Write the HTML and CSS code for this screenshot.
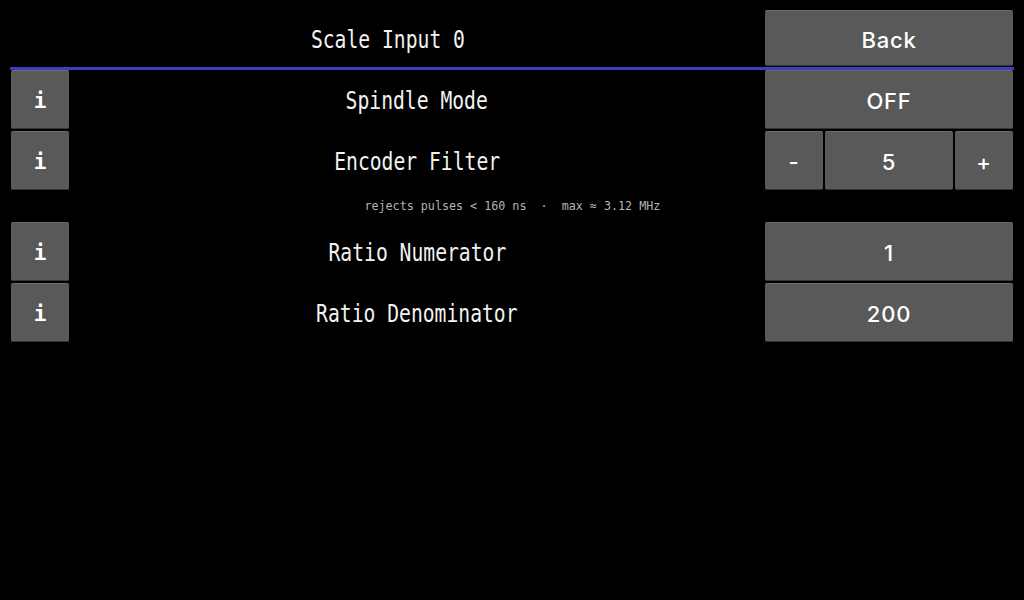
FILE: index.html
```html
<!DOCTYPE html>
<html lang="en">
<head>
  <meta charset="UTF-8" />
  <meta name="viewport" content="width=device-width, initial-scale=1.0"/>
  <title>Scale Input 0</title>
  <link rel="stylesheet" href="styles.css">
</head>
<body>
  <div class="screen">
    <header class="top">
      <h1 class="title"><span class="narrow">Scale Input 0</span></h1>
      <button class="btn back">Back</button>
    </header>
    <div class="rule"></div>

    <div class="row">
      <button class="btn info">i</button>
      <div class="label"><span class="narrow">Spindle Mode</span></div>
      <button class="btn value">OFF</button>
    </div>

    <div class="row">
      <button class="btn info">i</button>
      <div class="label"><span class="narrow">Encoder Filter</span></div>
      <div class="stepper">
        <button class="btn">-</button>
        <button class="btn">5</button>
        <button class="btn">+</button>
      </div>
    </div>
    <div class="hint"><span class="narrow">rejects pulses &lt; 160 ns &nbsp;&middot;&nbsp; max &asymp; 3.12 MHz</span></div>

    <div class="row">
      <button class="btn info">i</button>
      <div class="label"><span class="narrow">Ratio Numerator</span></div>
      <button class="btn value">1</button>
    </div>

    <div class="row">
      <button class="btn info">i</button>
      <div class="label"><span class="narrow">Ratio Denominator</span></div>
      <button class="btn value">200</button>
    </div>
  </div>
</body>
</html>
```

FILE: styles.css
```css
body { margin: 0; background: #000; color: #f2f2f2; font-family: "DejaVu Sans Mono", monospace; }
.screen { width: 1004px; padding: 10px; }

/* condensed look for the mono labels */
.narrow { display: inline-block; transform: scaleX(0.82); white-space: pre; }

.top { display: grid; grid-template-columns: 1fr 248px; height: 56px; margin-right: 1px; }
.title { margin: 0; padding-top: 3px; font-size: 24px; font-weight: normal; display: flex; align-items: center; justify-content: center; }
.rule { height: 3px; background: #3d3dbd; margin-top: 1px; }

.btn {
  background: #595959; color: #fff; border: none; border-radius: 2px;
  border-top: 1px solid #6c6c6c; border-bottom: 1px solid #363636;
  font-family: Inter, "Open Sans", sans-serif; font-weight: 500; font-size: 22px; letter-spacing: 0.8px;
  padding: 3px 0 0 0; cursor: pointer;
}

.row { display: grid; grid-template-columns: 58px 1fr 248px; height: 59px; margin: 0 1px 2px 1px; }
.info { font-family: "DejaVu Sans Mono", monospace; font-weight: bold; font-size: 21px; letter-spacing: 0; }
.label { font-size: 24px; padding-top: 3px; display: flex; align-items: center; justify-content: center; }
.stepper { display: grid; grid-template-columns: 58px 1fr 58px; gap: 2px; }

.hint { height: 30px; padding-bottom: 3px; box-sizing: border-box; font-size: 13px; color: #b4b4b4; display: flex; align-items: center; justify-content: center; }
.hint .narrow { transform: scaleX(0.9); }
```
